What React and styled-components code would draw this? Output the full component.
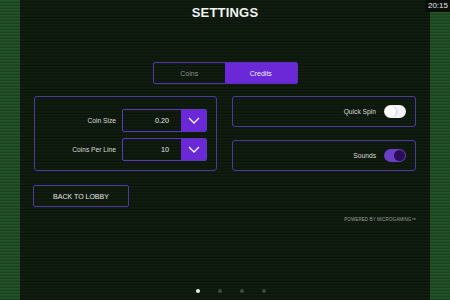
import styled, { createGlobalStyle } from "styled-components"

const Global = createGlobalStyle`
  html, body { margin: 0; padding: 0; background: #0e180d; }
  body { font-family: "Liberation Sans", Arial, sans-serif; }
`

const Screen = styled.div`
  position: relative;
  width: 450px;
  height: 300px;
  display: flex;
  overflow: hidden;
`

const Strip = styled.div`
  width: 20px;
  flex: none;
  background: repeating-linear-gradient(180deg, #25532a 0px, #25532a 1px, #1b421f 2px, #1b421f 3px);
`

const Main = styled.div`
  flex: 1;
  display: flex;
  flex-direction: column;
  padding: 0 14px;
  background: repeating-linear-gradient(180deg, #111d10 0px, #111d10 1px, #0c160b 2px, #0c160b 3px);
`

const Title = styled.h1`
  margin: 5px 0 0;
  height: 16px;
  font-size: 13px;
  font-weight: bold;
  color: #f2f2f2;
  text-align: center;
  letter-spacing: 0.2px;
`

const Clock = styled.div`
  position: absolute;
  top: 0;
  right: 0;
  padding: 1px 2px 2px 3px;
  background: #0a0f0a;
  color: #e8e8e8;
  font-size: 8px;
`

const Tabs = styled.div`
  align-self: center;
  display: flex;
  margin-top: 41px;
  width: 143px;
  height: 20px;
  border: 1px solid #5633b0;
  border-radius: 2px;
`

const Tab = styled.div`
  flex: 1;
  display: flex;
  align-items: center;
  justify-content: center;
  font-size: 7px;
  color: ${p => (p.$on ? "#f0eaff" : "#8a8f8a")};
  background: ${p => (p.$on ? "#6a28d6" : "transparent")};
`

const Grid = styled.div`
  display: grid;
  grid-template-columns: 183px 184px;
  column-gap: 15px;
  margin-top: 12px;
`

const Panel = styled.div`
  box-sizing: border-box;
  border: 1.5px solid #4e3a9e;
  border-radius: 3px;
  height: ${p => p.$h}px;
`

const LeftPanel = styled(Panel)`
  display: flex;
  flex-direction: column;
  gap: 6px;
  padding: 12px 9px 0 0;
`

const RightCol = styled.div`
  display: flex;
  flex-direction: column;
  gap: 13px;
`

const Row = styled.div`
  display: flex;
  align-items: center;
  justify-content: flex-end;
  gap: 6px;
`

const Label = styled.span`
  font-size: 6.7px;
  color: #dadada;
`

const Select = styled.div`
  display: flex;
  width: 85px;
  height: 23px;
  box-sizing: border-box;
  border: 1px solid #5a3bb5;
  border-radius: 2px;
  overflow: hidden;
`

const Value = styled.div`
  flex: 1;
  display: flex;
  align-items: center;
  justify-content: flex-end;
  padding-right: 12px;
  font-size: 7.2px;
  color: #e8e8e8;
`

const Arrow = styled.div`
  width: 25px;
  background: #6a28d6;
  display: flex;
  align-items: center;
  justify-content: center;
`

const ToggleRow = styled(Panel)`
  display: flex;
  align-items: center;
  justify-content: flex-end;
  gap: 8px;
  padding-right: 9px;
`

const Switch = styled.div`
  position: relative;
  width: 22px;
  height: 13px;
  border-radius: 7px;
  background: ${p => (p.$on ? "#6b3fc4" : "#f4f2f8")};
`

const Knob = styled.div`
  position: absolute;
  top: 1px;
  ${p => (p.$on ? "right: 1px;" : "left: 1px;")}
  width: 11px;
  height: 11px;
  border-radius: 50%;
  background: ${p => (p.$on ? "#2a0d55" : "#ffffff")};
  box-shadow: ${p => (p.$on ? "none" : "1px 0 1px rgba(0,0,0,0.15)")};
`

const LobbyButton = styled.div`
  margin-top: 14px;
  margin-left: -1px;
  width: 96px;
  height: 22px;
  box-sizing: border-box;
  border: 1.5px solid #4e3a9e;
  border-radius: 2px;
  display: flex;
  align-items: center;
  justify-content: center;
  font-size: 7px;
  color: #e6e6e6;
`

const Powered = styled.div`
  align-self: flex-end;
  margin-top: 10px;
  font-size: 4.5px;
  color: #9aa39a;
  letter-spacing: 0.1px;
`

const Dots = styled.div`
  margin-top: auto;
  margin-bottom: 7px;
  display: flex;
  justify-content: center;
  gap: 18px;
  padding-left: 12px;
`

const Dot = styled.div`
  width: 4px;
  height: 4px;
  border-radius: 50%;
  background: ${p => (p.$on ? "#e8f0e8" : "#3f4a3f")};
`

const Chevron = () => (
  <svg width="12" height="7" viewBox="0 0 12 7">
    <path d="M1 1 L6 6 L11 1" fill="none" stroke="#ffffff" strokeWidth="1.3" />
  </svg>
)

const App = () => {
  return (
    <Screen>
      <Global />
      <Strip />
      <Main>
        <Title>SETTINGS</Title>
        <Tabs>
          <Tab>Coins</Tab>
          <Tab $on>Credits</Tab>
        </Tabs>
        <Grid>
          <LeftPanel $h={75}>
            <Row>
              <Label>Coin Size</Label>
              <Select>
                <Value>0.20</Value>
                <Arrow><Chevron /></Arrow>
              </Select>
            </Row>
            <Row>
              <Label>Coins Per Line</Label>
              <Select>
                <Value>10</Value>
                <Arrow><Chevron /></Arrow>
              </Select>
            </Row>
          </LeftPanel>
          <RightCol>
            <ToggleRow $h={31}>
              <Label>Quick Spin</Label>
              <Switch><Knob /></Switch>
            </ToggleRow>
            <ToggleRow $h={31}>
              <Label>Sounds</Label>
              <Switch $on><Knob $on /></Switch>
            </ToggleRow>
          </RightCol>
        </Grid>
        <LobbyButton>BACK TO LOBBY</LobbyButton>
        <Powered>POWERED BY MICROGAMING™</Powered>
        <Dots>
          <Dot $on />
          <Dot />
          <Dot />
          <Dot />
        </Dots>
      </Main>
      <Strip />
      <Clock>20:15</Clock>
    </Screen>
  )
}

export default App
